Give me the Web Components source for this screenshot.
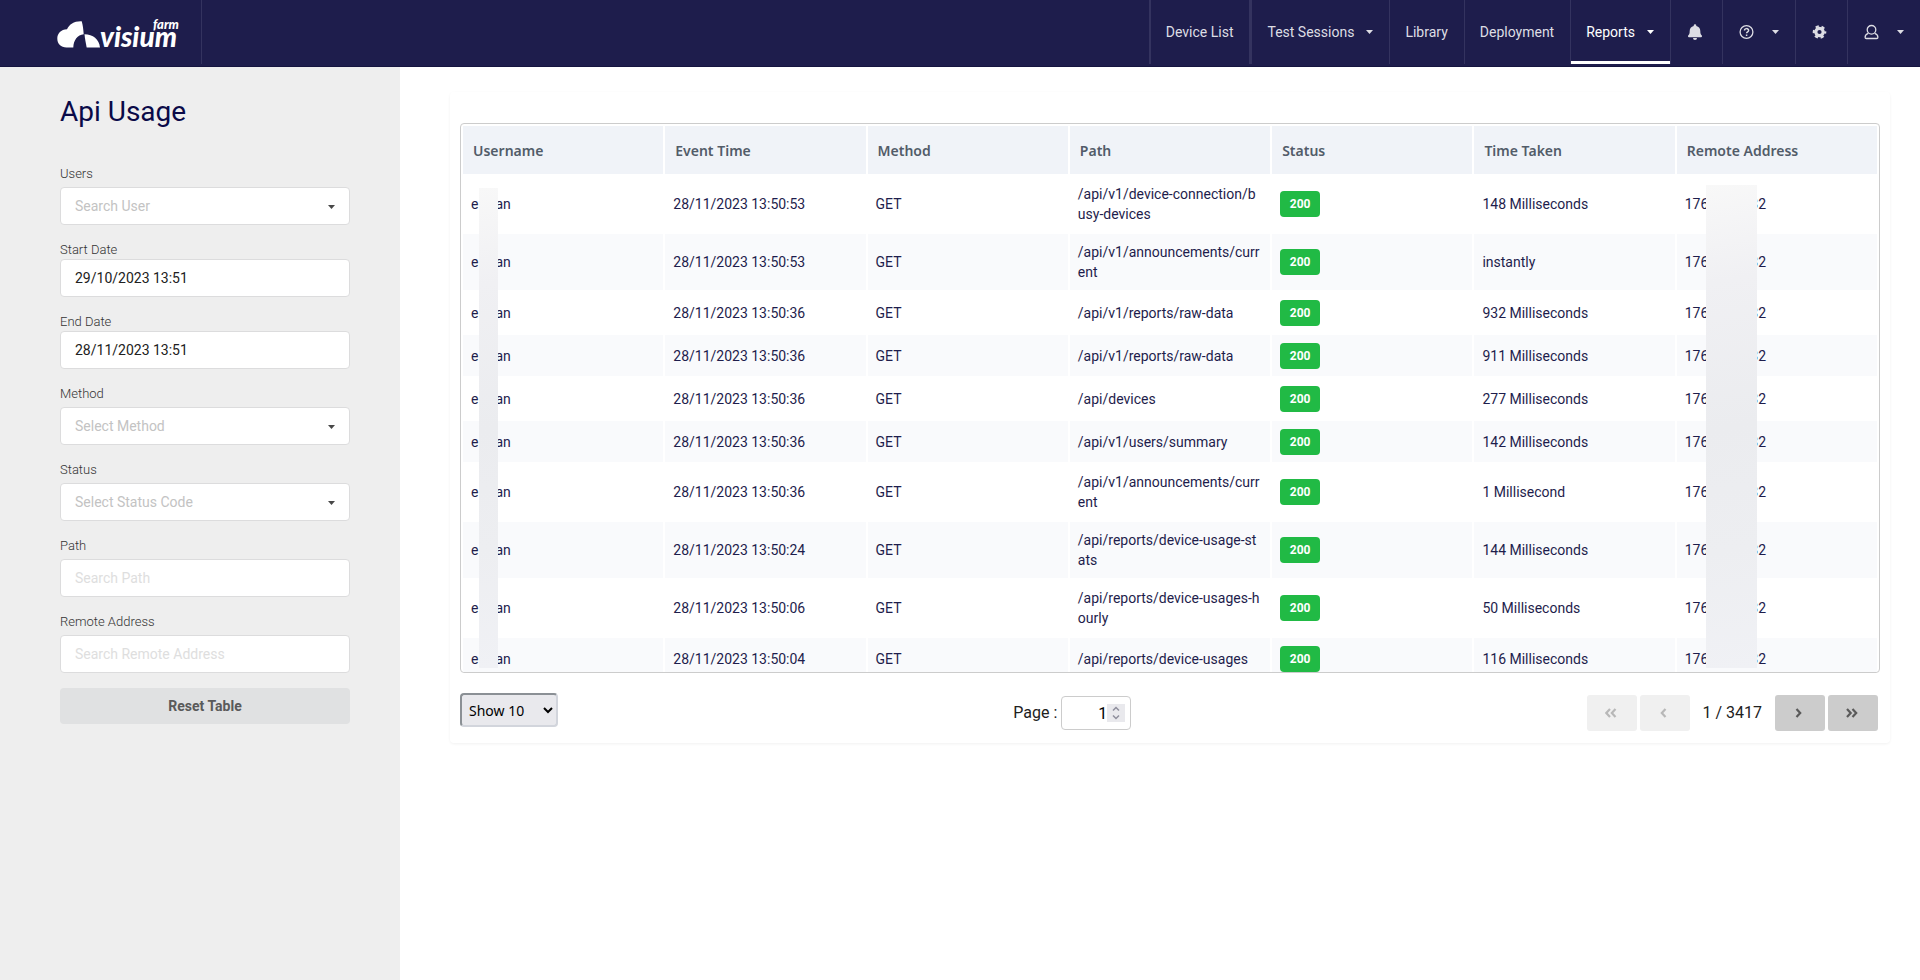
<!DOCTYPE html>
<html lang="en">
<head>
<meta charset="utf-8">
<title>Visium Farm – Api Usage</title>
<style>
  body { margin: 0; background: #fff; font-family: Roboto, "Liberation Sans", sans-serif; font-size: 14px; line-height: 20px; color: #1e1d4c; }
</style>
</head>
<body>
<app-shell></app-shell>
<script>
const define = (name, html) => customElements.define(name, class extends HTMLElement {
  constructor() {
    super();
    const t = document.createElement('template');
    t.innerHTML = typeof html === 'function' ? html(this) : html;
    this.attachShadow({ mode: 'open' }).append(t.content.cloneNode(true));
  }
});

/* Small downward triangle used by menus and pickers */
define('caret-icon', `
  <style>:host{display:block;width:7px;height:4px}svg{display:block}</style>
  <svg width="7" height="4" viewBox="0 0 7 4" aria-hidden="true"><path fill="currentColor" d="M0 0h7L3.500 4z"/></svg>`);

define('brand-logo', `
  <style>:host{display:block}a{display:block}svg{display:block}</style>
  <a href="#" aria-label="Visium Farm">
    <svg width="136" height="44" viewBox="0 -7 136 44" fill="#fff">
      <path d="M9.500 28.500C4 28.500.300 25 .300 19.500c0-5 3.700-9 9.700-9.200C12.500 5.200 17 2 24.700 2.300c1.200 4 1.600 7.700 2 13C20.500 16 16.600 21 16.300 28.500z"/>
      <path d="M27.500 15.300c8.500.200 14.600 5 15.500 13.200H29.700c-1-4.700-1.700-8.500-2.200-13.200z"/>
      <text x="43" y="28" font-family="Lato, sans-serif" font-size="28" font-weight="900" font-style="italic">visium</text>
      <text x="96" y="10" font-family="Lato, sans-serif" font-size="13" font-weight="900" font-style="italic">farm</text>
    </svg>
  </a>`);

define('nav-item', `
  <style>
    :host{display:block;height:64px;border-left:1px solid #34335f;color:#dddde4}
    :host([first]){border-left-width:2px}
    :host([wide]){border-left-width:3px}
    a{display:flex;align-items:center;height:64px;padding:0 16px 0 15px;color:inherit;text-decoration:none;white-space:nowrap}
    :host([active]){color:#fff;box-shadow:inset 0 -3px #fff}
    caret-icon{margin-left:12px}
    :host(:not([menu])) caret-icon{display:none}
    :host([icon]) a{padding:0 16px}
    :host([icon]) caret-icon{margin-left:17px}
  </style>
  <a href="#"><slot></slot><caret-icon></caret-icon></a>`);

define('top-bar', `
  <style>
    :host{display:flex;height:67px;background:#1e1d4c;box-sizing:border-box;border-bottom:1px solid #15143f}
    .brand{display:flex;align-items:center;box-sizing:border-box;width:202px;height:64px;padding:4px 0 0 57px;border-right:1px solid #34335f}
    nav{display:flex;margin-left:auto}
    svg{display:block}
  </style>
  <div class="brand"><brand-logo></brand-logo></div>
  <nav aria-label="Main">
    <nav-item first>Device List</nav-item>
    <nav-item wide menu>Test Sessions</nav-item>
    <nav-item>Library</nav-item>
    <nav-item>Deployment</nav-item>
    <nav-item menu active>Reports</nav-item>
    <nav-item icon><svg width="19" height="16" viewBox="0 0 19 16" fill="currentColor" role="img" aria-label="Notifications"><path d="M6.700 2V1.500a1.300 1.300 0 0 1 2.600 0V2c2.600.500 4 2.400 4 5 0 2.800.600 3.600 1.500 4.600.500.600.200 1.700-.700 1.700H1.900c-.900 0-1.200-1.100-.700-1.700C2.100 10.600 2.700 9.800 2.700 7c0-2.600 1.400-4.500 4-5zM6 14h4a2 2 0 0 1-4 0z"/></svg></nav-item>
    <nav-item icon menu><svg width="16" height="16" viewBox="0 0 16 16" fill="none" stroke="currentColor" role="img" aria-label="Help"><circle cx="7.500" cy="8" r="6.400" stroke-width="1.300"/><path stroke-width="1.500" d="M5.500 6.600C5.500 4 9.600 4 9.600 6.400 9.600 7.900 7.600 7.900 7.600 9.300M7.600 10.500v1.500"/></svg></nav-item>
    <nav-item icon><svg width="19" height="16" viewBox="0 0 19 16" role="img" aria-label="Settings"><g fill="none" stroke="currentColor"><circle cx="7.500" cy="8" r="3.700" stroke-width="3.200"/><circle cx="7.500" cy="8" r="5.700" stroke-width="2.200" stroke-dasharray="3.200 2.769" stroke-dashoffset="1.600"/></g></svg></nav-item>
    <nav-item icon menu><svg width="16" height="16" viewBox="0 0 16 16" fill="none" stroke="currentColor" stroke-width="1.300" role="img" aria-label="Account"><circle cx="7.500" cy="5.800" r="4.300"/><path d="M4.300 9.300C2 10 1.100 11.600 1.100 13.300c0 .800.400 1.200 1.200 1.200h10.400c.800 0 1.200-.400 1.200-1.200 0-1.700-.900-3.300-3.200-4"/></svg></nav-item>
  </nav>`);

/* Labelled text box or picker: attributes label, value, hint, picker, tight */
define('filter-field', el => {
  const a = n => el.getAttribute(n) || '';
  const box = el.hasAttribute('picker')
    ? `<select id="f"><option>${a('hint')}</option></select><caret-icon></caret-icon>`
    : `<input id="f" type="text" value="${a('value')}" placeholder="${a('hint')}">`;
  return `<style>
    :host{display:block;margin-bottom:15px}
    label{display:block;font-size:13px;font-weight:300;line-height:19px;color:#333;margin-bottom:4px}
    :host([tight]) label{margin-bottom:0}
    .box{position:relative}
    input,select{display:block;box-sizing:border-box;width:100%;height:38px;padding:0 14px;border:1px solid #dcdcdd;border-radius:4px;background:#fff;font:inherit;color:#212121;appearance:none;outline:0}
    select{color:#c3c3c3}
    input::placeholder{color:#dedede;opacity:1}
    caret-icon{position:absolute;right:15px;top:18px;color:#484848;pointer-events:none}
  </style>
  <label for="f">${a('label')}</label><div class="box">${box}</div>`;
});

define('filter-panel', `
  <style>
    :host{display:block;box-sizing:border-box;padding:28px 50px 28px 60px;background:#eee}
    h1{margin:0 0 36px;font-size:28px;line-height:33px;font-weight:400;color:#0a0a48}
    button{display:block;width:100%;height:36px;border:0;border-radius:4px;background:#e0e1e2;color:#5a5a5a;font:inherit;font-weight:700}
  </style>
  <h1>Api Usage</h1>
  <filter-field label="Users" hint="Search User" picker></filter-field>
  <filter-field label="Start Date" value="29/10/2023 13:51" tight></filter-field>
  <filter-field label="End Date" value="28/11/2023 13:51" tight></filter-field>
  <filter-field label="Method" hint="Select Method" picker></filter-field>
  <filter-field label="Status" hint="Select Status Code" picker></filter-field>
  <filter-field label="Path" hint="Search Path"></filter-field>
  <filter-field label="Remote Address" hint="Search Remote Address"></filter-field>
  <button type="button">Reset Table</button>`);

define('status-badge', `
  <style>:host{display:block;width:40px;height:26px;border-radius:4px;background:#21ba45;color:#fff;font-size:12px;font-weight:700;line-height:26px;text-align:center}</style>
  <slot></slot>`);

const requests = [
  ['50:53', '/api/v1/device-connection/busy-devices', '148 Milliseconds'],
  ['50:53', '/api/v1/announcements/current', 'instantly'],
  ['50:36', '/api/v1/reports/raw-data', '932 Milliseconds'],
  ['50:36', '/api/v1/reports/raw-data', '911 Milliseconds'],
  ['50:36', '/api/devices', '277 Milliseconds'],
  ['50:36', '/api/v1/users/summary', '142 Milliseconds'],
  ['50:36', '/api/v1/announcements/current', '1 Millisecond'],
  ['50:24', '/api/reports/device-usage-stats', '144 Milliseconds'],
  ['50:06', '/api/reports/device-usages-hourly', '50 Milliseconds'],
  ['50:04', '/api/reports/device-usages', '116 Milliseconds']
];

define('usage-table', `
  <style>
    :host{display:block;height:548px;overflow:hidden;border:1px solid #ccc;border-radius:4px;background:#fff}
    table{width:100%;table-layout:fixed;border-spacing:2px}
    th{position:relative;box-sizing:border-box;height:48px;padding:2px 10px 0;background:#f0f3f8;color:#525c69;font:600 14px/20px "Noto Sans",sans-serif;text-align:left}
    td{box-sizing:border-box;height:41px;padding:0 8px;vertical-align:middle;word-break:break-all}
    td.path{padding-top:8px;padding-bottom:8px}
    tr:nth-child(even) td{background:#f9fafc}
    .veil{position:absolute;z-index:1;background:linear-gradient(170deg,#f8f8f8,#f0f0f3 20%,#ebecef 50%,#edeef1 75%,#f0f1f5)}
    .user-veil{left:16px;top:62px;width:19px;height:480px}
    .addr-veil{left:29px;top:59px;width:51px;height:483px}
    .gap{display:inline-block}
    .user-gap{width:17px}
    .addr-gap{width:42px}
  </style>
  <table>
    <thead><tr>
      <th scope="col">Username<span class="veil user-veil"></span></th><th scope="col">Event Time</th><th scope="col">Method</th><th scope="col">Path</th><th scope="col">Status</th><th scope="col">Time Taken</th>
      <th scope="col">Remote Address<span class="veil addr-veil"></span></th>
    </tr></thead>
    <tbody>${requests.map(([time, path, taken]) => `
      <tr><td>e<span class="gap user-gap"></span>an</td><td>28/11/2023 13:${time}</td><td>GET</td><td class="path">${path}</td><td><status-badge>200</status-badge></td><td>${taken}</td><td>176<span class="gap addr-gap"></span>32</td></tr>`).join('')}
    </tbody>
  </table>`);

define('table-pager', `
  <style>
    :host{display:flex;justify-content:space-between;align-items:flex-start;padding:20px 2px 12px 0;font-size:16px;color:#212121}
    .size{box-sizing:border-box;width:98px;height:34px;padding:0 3px;border:2px solid;border-color:#8b9095 #d2d5dc #d2d5dc #8b9095;border-radius:4px;background:#e9e9ed;color:#000;font:14px "Noto Sans",sans-serif}
    .page,.steps{display:flex;align-items:center;height:36px;margin-top:2px}
    .number{position:relative;margin-left:4px}
    input{display:block;box-sizing:border-box;width:70px;height:34px;padding:0 23px 0 8px;border:1px solid #ccc;border-radius:4px;background:#fff;font:inherit;color:#000;text-align:right;appearance:textfield;outline:0}
    input::-webkit-inner-spin-button{appearance:none;margin:0}
    .spin{position:absolute;right:6px;top:8px;display:block;background:#e9e9ed}
    button{display:flex;align-items:center;justify-content:center;width:50px;height:36px;padding:0;border:0;border-radius:3px;background:#ccc;color:#5a5a5a}
    button:disabled{background:#f0f0f0;color:#b8b8b8}
    button + button{margin-left:3px}
    .count{margin:0 13px}
  </style>
  <select class="size" aria-label="Rows per page"><option>Show 10</option></select>
  <div class="page"><label for="p">Page :</label><div class="number"><input id="p" type="number" value="1">
    <svg class="spin" width="18" height="18" viewBox="0 0 18 18" fill="none" stroke="#8f8f9d" stroke-width="1.500"><path d="M6 6.500l3-3 3 3M6 11.500l3 3 3-3"/></svg></div></div>
  <div class="steps">
    <button type="button" disabled aria-label="First page"><svg width="14" height="12" viewBox="1 0 14 12" fill="none" stroke="currentColor" stroke-width="2.200"><path d="M6 2L2.300 6 6 10M11.500 2L7.800 6l3.700 4"/></svg></button>
    <button type="button" disabled aria-label="Previous page"><svg width="10" height="12" viewBox="1 0 10 12" fill="none" stroke="currentColor" stroke-width="2.200"><path d="M6.500 2L2.800 6l3.700 4"/></svg></button>
    <span class="count">1 / 3417</span>
    <button type="button" aria-label="Next page"><svg width="10" height="12" viewBox="1 0 10 12" fill="none" stroke="currentColor" stroke-width="2.200"><path d="M2.500 2l3.700 4-3.700 4"/></svg></button>
    <button type="button" aria-label="Last page"><svg width="14" height="12" viewBox="1 0 14 12" fill="none" stroke="currentColor" stroke-width="2.200"><path d="M2 2l3.700 4L2 10M7.500 2l3.700 4-3.700 4"/></svg></button>
  </div>`);

define('report-card', `
  <style>:host{display:block;padding:31px 10px 0;border-radius:4px;box-shadow:0 1px 3px rgba(0,0,0,.06)}</style>
  <slot></slot>`);

define('app-shell', `
  <style>
    :host{display:flex;flex-direction:column;min-height:100vh}
    .body{display:grid;grid-template-columns:400px minmax(0,1fr);flex:1}
    main{padding:25px 30px 25px 50px}
  </style>
  <top-bar></top-bar>
  <div class="body">
    <filter-panel></filter-panel>
    <main><report-card><usage-table></usage-table><table-pager></table-pager></report-card></main>
  </div>`);
</script>
</body>
</html>
